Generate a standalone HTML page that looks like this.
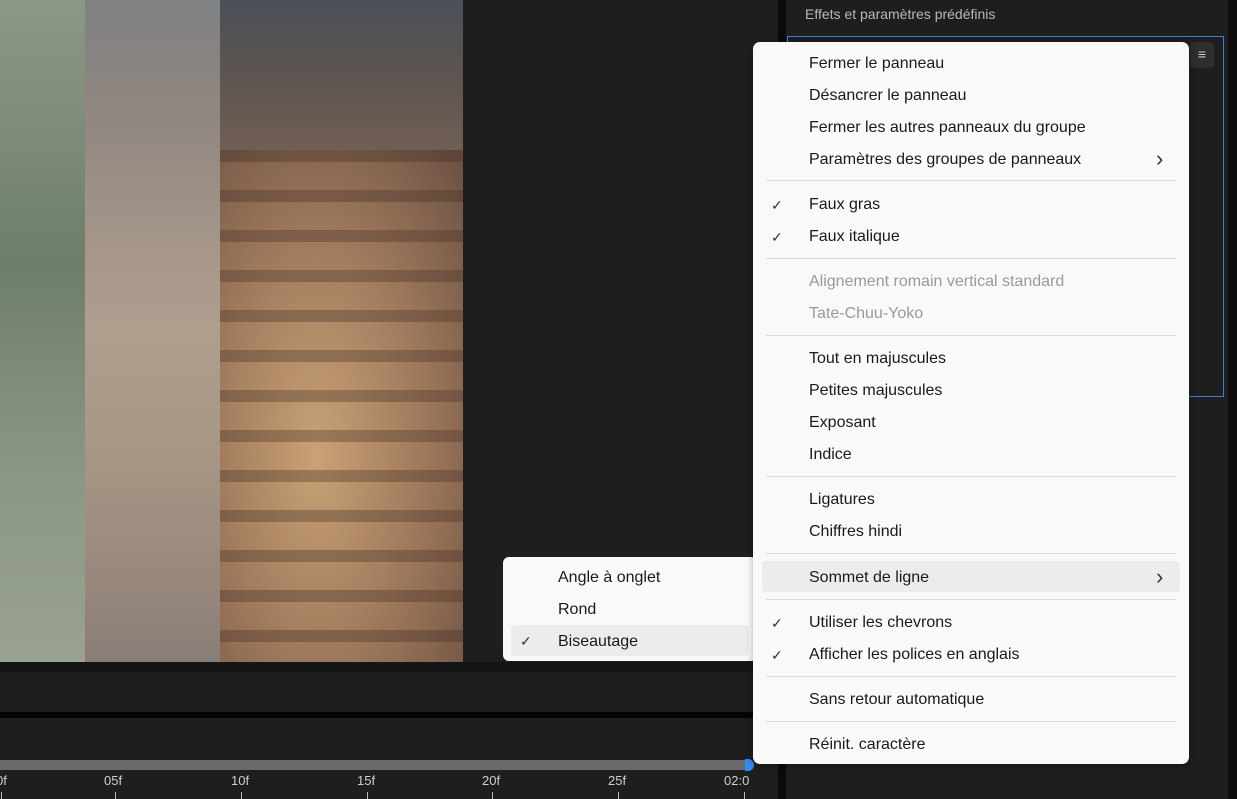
<!DOCTYPE html>
<html><head><meta charset="utf-8"><style>
*{margin:0;padding:0;box-sizing:border-box}
body{width:1237px;height:799px;background:#1e1e1e;position:relative;overflow:hidden;font-family:"Liberation Sans",sans-serif}
.a{position:absolute}
.it{position:absolute;font-size:16px;color:#1a1a1a;line-height:20px;white-space:nowrap;margin-top:2px}
.dis{color:#9a9a9a}
.ck{position:absolute;font-size:14px;color:#333;margin-top:2px}
.sep{position:absolute;left:766px;width:410px;height:1px;background:#dcdcdc}
.chev{position:absolute;font-size:22px;color:#333;line-height:20px;margin-top:1px}
.lab{position:absolute;top:773px;font-size:13px;color:#cfcfcf}
.tick{position:absolute;top:792px;width:1px;height:7px;background:#bbb}
</style></head><body>
<!-- photo -->
<div class="a" style="left:0;top:0;width:463px;height:662px;background:linear-gradient(180deg,#4a5058 0%,#5e5550 12%,#6e5e55 22%,#86705f 35%,#9a8068 50%,#8c7058 70%,#705848 90%,#5a4a42 100%)"></div>
<div class="a" style="left:220px;top:150px;width:243px;height:512px;background:repeating-linear-gradient(180deg,rgba(60,40,30,.35) 0 12px,rgba(0,0,0,0) 12px 40px),radial-gradient(ellipse at 40% 60%,#d0a878 0%,#a88060 45%,#6a4e40 100%);opacity:.9"></div>
<div class="a" style="left:85px;top:0;width:135px;height:662px;background:#d0cdc8;opacity:.4"></div>
<div class="a" style="left:0;top:0;width:85px;height:662px;background:linear-gradient(180deg,#8c9886,#6e7e68 40%,#8a9684 70%,#9aa292)"></div>
<div class="a" style="left:0;top:662px;width:786px;height:10px;background:#151515"></div>
<div class="a" style="left:0;top:712px;width:786px;height:6px;background:#050505"></div>
<div class="a" style="left:0;top:760px;width:750px;height:10px;background:#6a6a6a"></div>
<div class="a" style="left:745px;top:759px;width:9px;height:12px;background:#2f8cf0;border-radius:0 6px 6px 0"></div>
<div class="lab" style="left:-4px">0f</div><div class="tick" style="left:1px"></div>
<div class="lab" style="left:104px">05f</div><div class="tick" style="left:115px"></div>
<div class="lab" style="left:231px">10f</div><div class="tick" style="left:241px"></div>
<div class="lab" style="left:357px">15f</div><div class="tick" style="left:367px"></div>
<div class="lab" style="left:482px">20f</div><div class="tick" style="left:492px"></div>
<div class="lab" style="left:608px">25f</div><div class="tick" style="left:618px"></div>
<div class="lab" style="left:724px">02:0</div><div class="tick" style="left:744px"></div>
<!-- right panel -->
<div class="a" style="left:778px;top:0;width:8px;height:799px;background:#0a0a0a"></div>
<div class="a" style="left:1228px;top:0;width:9px;height:799px;background:#0e0e0e"></div>
<div class="a" style="left:805px;top:6px;font-size:14px;color:#b8b8b8">Effets et paramètres prédéfinis</div>
<div class="a" style="left:787px;top:36px;width:437px;height:361px;border:1.5px solid #3b82d6"></div>
<div class="a" style="left:1190px;top:42px;width:24px;height:26px;background:#2e2e2e;border-radius:4px;color:#ccc;font-size:14px;text-align:center;line-height:24px">≡</div>
<!-- submenu -->
<div class="a" style="left:503px;top:557px;width:254px;height:104px;background:#f9f9f9;border-radius:6px"></div>
<div class="a" style="left:511px;top:625px;width:238px;height:31px;background:#ececec;border-radius:4px"></div>
<div class="it" style="left:558px;top:566px">Angle à onglet</div>
<div class="it" style="left:558px;top:598px">Rond</div>
<div class="it" style="left:558px;top:630px">Biseautage</div>
<div class="ck" style="left:520px;top:631px">✓</div>
<!-- main menu -->
<div class="a" style="left:753px;top:42px;width:436px;height:722px;background:#f9f9f9;border-radius:7px;box-shadow:0 2px 8px rgba(0,0,0,.3)"></div>
<div class="a" style="left:762px;top:561px;width:418px;height:31px;background:#ececec;border-radius:4px"></div>
<div class="it" style="left:809px;top:52px">Fermer le panneau</div>
<div class="it" style="left:809px;top:84px">Désancrer le panneau</div>
<div class="it" style="left:809px;top:116px">Fermer les autres panneaux du groupe</div>
<div class="it" style="left:809px;top:148px">Paramètres des groupes de panneaux</div>
<div class="chev" style="left:1156px;top:148px">›</div>
<div class="sep" style="top:180px"></div>
<div class="it" style="left:809px;top:193px">Faux gras</div><div class="ck" style="left:771px;top:195px">✓</div>
<div class="it" style="left:809px;top:225px">Faux italique</div><div class="ck" style="left:771px;top:227px">✓</div>
<div class="sep" style="top:258px"></div>
<div class="it dis" style="left:809px;top:270px">Alignement romain vertical standard</div>
<div class="it dis" style="left:809px;top:302px">Tate-Chuu-Yoko</div>
<div class="sep" style="top:335px"></div>
<div class="it" style="left:809px;top:347px">Tout en majuscules</div>
<div class="it" style="left:809px;top:379px">Petites majuscules</div>
<div class="it" style="left:809px;top:411px">Exposant</div>
<div class="it" style="left:809px;top:443px">Indice</div>
<div class="sep" style="top:476px"></div>
<div class="it" style="left:809px;top:488px">Ligatures</div>
<div class="it" style="left:809px;top:520px">Chiffres hindi</div>
<div class="sep" style="top:553px"></div>
<div class="it" style="left:809px;top:566px">Sommet de ligne</div>
<div class="chev" style="left:1156px;top:566px">›</div>
<div class="sep" style="top:599px"></div>
<div class="it" style="left:809px;top:611px">Utiliser les chevrons</div><div class="ck" style="left:771px;top:613px">✓</div>
<div class="it" style="left:809px;top:643px">Afficher les polices en anglais</div><div class="ck" style="left:771px;top:645px">✓</div>
<div class="sep" style="top:676px"></div>
<div class="it" style="left:809px;top:688px">Sans retour automatique</div>
<div class="sep" style="top:721px"></div>
<div class="it" style="left:809px;top:733px">Réinit. caractère</div>
</body></html>
